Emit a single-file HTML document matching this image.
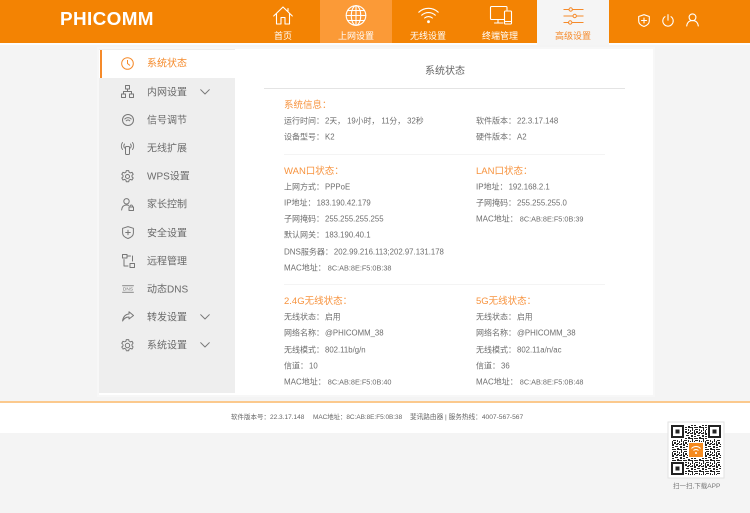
<!DOCTYPE html>
<html lang="zh"><head><meta charset="utf-8"><title>系统状态</title>
<style>
html,body{margin:0;padding:0;width:750px;height:513px;overflow:hidden;background:#f4f4f4}
body{position:relative;font-family:"Liberation Sans","Noto Sans CJK SC",sans-serif;color:#666}
.a{position:absolute;white-space:nowrap}
.t{position:absolute;white-space:nowrap;font-size:8px;line-height:12px;color:#6e6e6e;transform:translateY(-5.500px)}
.t span{margin-left:1px;font-size:7.800px}
.t span.m{font-size:7.300px;margin-left:2px}
.h{position:absolute;white-space:nowrap;font-size:9.500px;line-height:12px;color:#f7933e;transform:translateY(-5px)}
.n{position:absolute;white-space:nowrap;left:147px;font-size:10px;line-height:14px;color:#6a6a6a;transform:translateY(-5.500px)}
.nav{position:absolute;width:72px;text-align:center;top:29.500px;font-size:9px;line-height:12px;color:#fff}
svg{position:absolute;overflow:visible}
.s{fill:none;stroke:#777;stroke-width:1;stroke-linecap:round;stroke-linejoin:round}
.w{fill:none;stroke:#fff;stroke-width:1.1;stroke-linecap:round;stroke-linejoin:round}
</style></head><body>
<div class="a" style="left:0;top:0;width:750px;height:43px;background:#f38303"></div>
<div class="a" style="left:0;top:43px;width:750px;height:2px;background:#fdfdfd"></div>
<div class="a" style="left:320px;top:0;width:72px;height:43px;background:#fb9a37"></div>
<div class="a" style="left:537px;top:0;width:72px;height:45px;background:#f5f5f5"></div>
<div class="a" style="left:60px;top:10px;font-size:18px;line-height:19px;font-weight:bold;color:#fff;letter-spacing:.35px;transform:scaleX(1.05);transform-origin:left">PHICOMM</div>

<svg style="left:273px;top:6px" width="20" height="20" viewBox="0 0 20 20"><path class="w" d="M.7 10 10 1l9.300 9M3.500 8v10h4.500v-6.500h4V18h4.500V8M15 2.500v2.500"/></svg>
<svg style="left:345px;top:5px" width="22" height="21" viewBox="0 0 22 21"><g class="w"><circle cx="11" cy="10.500" r="9.800"/><ellipse cx="11" cy="10.500" rx="4.700" ry="9.800"/><path d="M11 .7v19.600M1.200 10.500h19.600M2.500 5.500h17M2.500 15.500h17"/></g></svg>
<svg style="left:418px;top:7px" width="21" height="17" viewBox="0 0 21 17"><g class="w"><path d="M.8 5.200a14 14 0 0 1 19.400 0M3.700 8.200a10 10 0 0 1 13.600 0M6.600 11a6 6 0 0 1 7.800 0"/></g><circle cx="10.500" cy="14.700" r="1.400" fill="#fff"/></svg>
<svg style="left:490px;top:6px" width="22" height="19" viewBox="0 0 22 19"><g class="w"><path d="M14 13.500H1.500a1 1 0 0 1-1-1V1.500a1 1 0 0 1 1-1h14.500a1 1 0 0 1 1 1V4M8 13.500v3.500M4.500 17H13"/><rect x="14.500" y="5" width="7" height="13" rx="1"/><path d="M14.500 15.500h7"/></g></svg>
<svg style="left:563px;top:7px" width="21" height="18" viewBox="0 0 21 18"><g fill="none" stroke="#f58a2a" stroke-width="1"><path d="M.5 2.500h5.500M9.500 2.500h11M.5 9h9.500M13.500 9h7M.5 15.500h5M9 15.500h11.500"/><circle cx="7.700" cy="2.500" r="1.700"/><circle cx="11.700" cy="9" r="1.700"/><circle cx="7.200" cy="15.500" r="1.700"/></g></svg>

<div class="nav" style="left:247px">首页</div>
<div class="nav" style="left:320px">上网设置</div>
<div class="nav" style="left:392px">无线设置</div>
<div class="nav" style="left:464px">终端管理</div>
<div class="nav" style="left:537px;color:#f58a2a">高级设置</div>

<svg style="left:638px;top:14px" width="12" height="13" viewBox="0 0 12 13"><path class="w" d="M6 .7 11.300 2.500V7c0 2.800-2.500 4.500-5.300 5.500C3.200 11.500.7 9.800.7 7V2.500zM6 4v5M3.500 6.500h5"/></svg>
<svg style="left:662px;top:14px" width="12" height="13" viewBox="0 0 12 13"><path class="w" d="M6 .7v5.500M3 2.700a5.200 5.200 0 1 0 6 0"/></svg>
<svg style="left:686px;top:13px" width="13" height="14" viewBox="0 0 13 14"><path class="w" d="M.7 13c.5-3.500 2.700-5.500 5.800-5.500s5.300 2 5.800 5.500"/><circle class="w" cx="6.500" cy="4.300" r="3.400"/></svg>

<div class="a" style="left:97px;top:47px;width:558px;height:350px;background:#f7f7f7"></div>
<div class="a" style="left:99px;top:49px;width:554px;height:346px;background:#fff"></div>
<div class="a" style="left:99px;top:49px;width:136px;height:344px;background:#eee"></div>
<div class="a" style="left:99px;top:50px;width:136px;height:28px;background:#fff"></div>
<div class="a" style="left:100px;top:50px;width:1.500px;height:28px;background:#f58a2a"></div>

<svg style="left:121px;top:57px" width="13" height="13" viewBox="0 0 13 13"><g fill="none" stroke="#f58a2a" stroke-width="1"><circle cx="6.500" cy="6.500" r="5.800"/><path d="M6.500 3v3.500l2.500 2"/></g></svg>
<svg style="left:121px;top:85px" width="13" height="13" viewBox="0 0 13 13"><g class="s"><rect x="4.500" y=".5" width="4" height="3.500"/><rect x=".5" y="9" width="4" height="3.500"/><rect x="8.500" y="9" width="4" height="3.500"/><path d="M6.500 4v2.500M2.500 9V6.500h8V9"/></g></svg>
<svg style="left:122px;top:114px" width="12" height="12" viewBox="0 0 12 12"><g class="s"><circle cx="6" cy="6" r="5.500"/><path d="M2.800 5a4.500 4.500 0 0 1 6.400 0M4.200 6.800a2.500 2.500 0 0 1 3.600 0"/></g></svg>
<svg style="left:121px;top:142px" width="13" height="13" viewBox="0 0 13 13"><g class="s"><rect x="4.500" y="4.500" width="4" height="8" rx="1"/><path d="M3.500 6A3.500 3.500 0 0 1 3.500 2M1.500 7.500a6 6 0 0 1 0-7M9.500 6a3.500 3.500 0 0 0 0-4M11.500 7.500a6 6 0 0 0 0-7"/></g></svg>
<svg style="left:121px;top:170px" width="13" height="13" viewBox="0 0 13 13"><g class="s"><path d="M5.300.6h2.400l.4 1.600 1.400.7 1.500-.6 1.200 2-1.200 1.100v1.500l1.200 1.100-1.200 2-1.500-.6-1.400.7-.4 1.600H5.300l-.4-1.600-1.400-.7-1.500.6-1.200-2 1.200-1.100V5.400L.8 4.300l1.200-2 1.500.6 1.400-.7z"/><circle cx="6.500" cy="6.500" r="2"/></g></svg>
<svg style="left:121px;top:198px" width="13" height="13" viewBox="0 0 13 13"><g class="s"><circle cx="5.500" cy="3.300" r="2.700"/><path d="M.6 12c.3-3 2-5 5-5 .8 0 1.400.1 2 .4"/><rect x="8" y="9" width="4.500" height="3.500"/><path d="M9 9V8a1.300 1.300 0 0 1 2.500 0v1"/></g></svg>
<svg style="left:122px;top:226px" width="12" height="13" viewBox="0 0 12 13"><path class="s" d="M6 .6 11.400 2.300V7c0 2.800-2.500 4.500-5.400 5.500C3.100 11.500.6 9.800.6 7V2.300zM6 4.200v4.600M3.700 6.500h4.600"/></svg>
<svg style="left:122px;top:254px" width="13" height="14" viewBox="0 0 13 14"><g class="s"><rect x=".5" y=".5" width="4.500" height="3.500"/><rect x="8" y="9.500" width="4.500" height="4"/><path d="M5 2h3.500M10.500 2v5M2 5.500v6.500h4"/></g></svg>
<svg style="left:122px;top:285px" width="12" height="8" viewBox="0 0 12 8"><rect x=".2" y=".2" width="11.600" height="1" fill="#888"/><rect x=".2" y="6.800" width="11.600" height="1" fill="#888"/><text x="6" y="5.700" font-size="4.800" text-anchor="middle" fill="#777" font-family="Liberation Sans">DNS</text></svg>
<svg style="left:122px;top:311px" width="12" height="11" viewBox="0 0 12 11"><path class="s" d="M7 .8 11.500 4.500 7 8V6C4 6 2 7.500.6 10 1 6 3.500 3 7 3z"/></svg>
<svg style="left:121px;top:339px" width="13" height="13" viewBox="0 0 13 13"><g class="s"><path d="M5.300.6h2.400l.4 1.600 1.400.7 1.500-.6 1.200 2-1.200 1.100v1.500l1.200 1.100-1.200 2-1.500-.6-1.400.7-.4 1.600H5.300l-.4-1.600-1.400-.7-1.500.6-1.200-2 1.200-1.100V5.400L.8 4.300l1.200-2 1.500.6 1.400-.7z" stroke-dasharray="4 1"/><circle cx="6.500" cy="6.500" r="2.200"/></g></svg>

<div class="n" style="top:63px;color:#f58a2a">系统状态</div>
<div class="n" style="top:92px">内网设置</div>
<div class="n" style="top:120px">信号调节</div>
<div class="n" style="top:148px">无线扩展</div>
<div class="n" style="top:176px">WPS设置</div>
<div class="n" style="top:204px">家长控制</div>
<div class="n" style="top:233px">安全设置</div>
<div class="n" style="top:261px">远程管理</div>
<div class="n" style="top:289px">动态DNS</div>
<div class="n" style="top:317px">转发设置</div>
<div class="n" style="top:345px">系统设置</div>
<svg style="left:200px;top:89px" width="10" height="6" viewBox="0 0 10 6"><path class="s" d="M.7.7 5 5l4.300-4.300"/></svg>
<svg style="left:200px;top:314px" width="10" height="6" viewBox="0 0 10 6"><path class="s" d="M.7.7 5 5l4.300-4.300"/></svg>
<svg style="left:200px;top:342px" width="10" height="6" viewBox="0 0 10 6"><path class="s" d="M.7.7 5 5l4.300-4.300"/></svg>

<div class="a" style="left:425px;top:65px;font-size:10px;line-height:14px;color:#666">系统状态</div>
<div class="a" style="left:264px;top:88px;width:361px;height:1px;background:#e4e4e4"></div>
<div class="a" style="left:284px;top:154px;width:321px;height:1px;background:#f4f4f4"></div>
<div class="a" style="left:284px;top:284px;width:321px;height:1px;background:#f4f4f4"></div>

<div class="h" style="left:284px;top:105px">系统信息：</div>
<div class="t" style="left:284px;top:121px">运行时间：<span>2天， 19小时， 11分， 32秒</span></div>
<div class="t" style="left:284px;top:137px">设备型号：<span>K2</span></div>
<div class="t" style="left:476px;top:121px">软件版本：<span>22.3.17.148</span></div>
<div class="t" style="left:476px;top:137px">硬件版本：<span>A2</span></div>

<div class="h" style="left:284px;top:171px">WAN口状态：</div>
<div class="t" style="left:284px;top:187px">上网方式：<span>PPPoE</span></div>
<div class="t" style="left:284px;top:203px">IP地址：<span>183.190.42.179</span></div>
<div class="t" style="left:284px;top:219px">子网掩码：<span>255.255.255.255</span></div>
<div class="t" style="left:284px;top:235px">默认网关：<span>183.190.40.1</span></div>
<div class="t" style="left:284px;top:252px">DNS服务器：<span>202.99.216.113;202.97.131.178</span></div>
<div class="t" style="left:284px;top:268px">MAC地址：<span class="m">8C:AB:8E:F5:0B:38</span></div>

<div class="h" style="left:476px;top:171px">LAN口状态：</div>
<div class="t" style="left:476px;top:187px">IP地址：<span>192.168.2.1</span></div>
<div class="t" style="left:476px;top:203px">子网掩码：<span>255.255.255.0</span></div>
<div class="t" style="left:476px;top:219px">MAC地址：<span class="m">8C:AB:8E:F5:0B:39</span></div>

<div class="h" style="left:284px;top:301px">2.4G无线状态：</div>
<div class="t" style="left:284px;top:317px">无线状态：<span>启用</span></div>
<div class="t" style="left:284px;top:333px">网络名称：<span>@PHICOMM_38</span></div>
<div class="t" style="left:284px;top:350px">无线模式：<span>802.11b/g/n</span></div>
<div class="t" style="left:284px;top:366px">信道：<span>10</span></div>
<div class="t" style="left:284px;top:382px">MAC地址：<span class="m">8C:AB:8E:F5:0B:40</span></div>

<div class="h" style="left:476px;top:301px">5G无线状态：</div>
<div class="t" style="left:476px;top:317px">无线状态：<span>启用</span></div>
<div class="t" style="left:476px;top:333px">网络名称：<span>@PHICOMM_38</span></div>
<div class="t" style="left:476px;top:350px">无线模式：<span>802.11a/n/ac</span></div>
<div class="t" style="left:476px;top:366px">信道：<span>36</span></div>
<div class="t" style="left:476px;top:382px">MAC地址：<span class="m">8C:AB:8E:F5:0B:48</span></div>

<div class="a" style="left:0;top:401px;width:750px;height:2px;background:#fbc98d"></div>
<div class="a" style="left:0;top:403px;width:750px;height:30px;background:#fff"></div>
<div class="a" style="left:231px;top:412px;font-size:6.500px;line-height:12px;color:#666">软件版本号：22.3.17.148</div>
<div class="a" style="left:313px;top:412px;font-size:6.400px;line-height:12px;color:#666">MAC地址：8C:AB:8E:F5:0B:38</div>
<div class="a" style="left:410px;top:412px;font-size:6.650px;line-height:12px;color:#666">斐讯路由器 | 服务热线：4007-567-567</div>

<svg style="left:668px;top:422px" width="56" height="56" viewBox="0 0 56 56">
<defs><pattern id="q" width="11" height="11" patternUnits="userSpaceOnUse"><rect width="11" height="11" fill="#fff"/><path fill="#222" d="M0 0h3v1H0zM4 0h2v2H4zM8 0h2v1H8zM1 2h2v2H1zM7 2h3v1H7zM4 3h2v1H4zM9 4h2v2H9zM0 5h3v1H0zM4 5h4v1H4zM2 6h1v3H2zM5 7h3v1H5zM9 7h1v2H9zM0 8h1v2H0zM4 8h1v3H4zM6 9h2v2H6zM2 10h1v1H2zM9 10h2v1H9z"/></pattern></defs>
<rect width="56" height="56" fill="#fff" stroke="#e2e2e2" stroke-width="1"/>
<rect x="3" y="3" width="50" height="50" fill="url(#q)"/>
<g fill="#fff"><rect x="3" y="3" width="14" height="14"/><rect x="39" y="3" width="14" height="14"/><rect x="3" y="39" width="14" height="14"/></g>
<g fill="none" stroke="#222" stroke-width="2"><rect x="4" y="4" width="11" height="11"/><rect x="41" y="4" width="11" height="11"/><rect x="4" y="41" width="11" height="11"/></g>
<g fill="#222"><rect x="7.500" y="7.500" width="4" height="4"/><rect x="44.500" y="7.500" width="4" height="4"/><rect x="7.500" y="44.500" width="4" height="4"/></g>
<rect x="20" y="20" width="16" height="16" fill="#fff"/><rect x="21" y="21" width="14" height="14" fill="#f58a1f"/>
<path d="M23.500 26.500a6 6 0 0 1 9 0M25.500 28.500a3.500 3.500 0 0 1 5 0" fill="none" stroke="#fff" stroke-width="1"/><circle cx="28" cy="31" r="1" fill="#fff"/>
</svg>
<div class="a" style="left:673px;top:482px;font-size:6.500px;line-height:10px;color:#777">扫一扫,下载APP</div>
</body></html>
